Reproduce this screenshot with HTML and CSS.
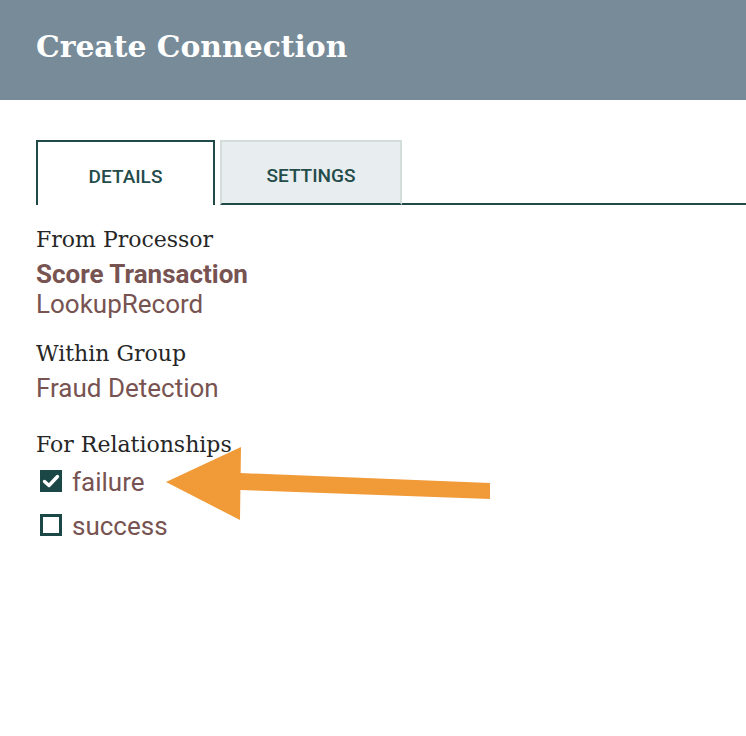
FILE: index.html
```html
<!DOCTYPE html>
<html>
<head>
<meta charset="utf-8">
<link rel="stylesheet" href="styles.css">
</head>
<body>
<div class="header"><h1 class="title">Create Connection</h1></div>
<div class="content">
  <div class="tabs">
    <div class="tab active">DETAILS</div>
    <div class="tab">SETTINGS</div>
    <div class="tab-fill"></div>
  </div>
  <div class="section first">
    <div class="label">From Processor</div>
    <div class="value bold">Score Transaction</div>
    <div class="value next">LookupRecord</div>
  </div>
  <div class="section">
    <div class="label">Within Group</div>
    <div class="value">Fraud Detection</div>
  </div>
  <div class="section rels">
    <div class="label">For Relationships</div>
    <div class="rel"><span class="box checked"><svg viewBox="0 0 22 22" width="22" height="22"><path d="M4.5 11.5 L9 15.5 L17.5 6.5" fill="none" stroke="#fff" stroke-width="3.4" stroke-linecap="round" stroke-linejoin="round"/></svg></span><span class="rel-name">failure</span></div>
    <div class="rel"><span class="box"></span><span class="rel-name">success</span></div>
  </div>
</div>
<svg class="arrow" width="746" height="736" viewBox="0 0 746 736">
  <polygon points="240,473 490,483 490,499 240,490" fill="#f19a38"/>
  <polygon points="166,482 241,447 240,520" fill="#f19a38"/>
</svg>
</body>
</html>
```
FILE: styles.css
```css
html, body { margin: 0; padding: 0; background: #fff; }
body { width: 746px; height: 736px; overflow: hidden; position: relative; }
.header { height: 100px; background: #778b99; padding-left: 36px; box-sizing: border-box; padding-top: 27px; }
.title { margin: 0; font-family: "DejaVu Serif", serif; font-weight: bold; font-size: 29.8px; line-height: 40px; color: #fff; }
.content { padding: 40px 0 0 36px; }
.tabs { display: flex; height: 65px; }
.tab { width: 179px; box-sizing: border-box; display: flex; align-items: center; justify-content: center; font-family: Roboto, sans-serif; font-weight: 500; font-size: 19px; color: #244c4a; padding-top: 5px; }
.tab.active { border: 2px solid #1f4a48; border-bottom: none; background: #fff; }
.tab:not(.active) { margin-left: 5px; width: 182px; background: #e8edef; border: 2px solid #d3dddb; border-bottom: 2px solid #1f4a48; }
.tab-fill { flex: 1; border-bottom: 2px solid #1f4a48; }
.section { margin-top: 20px; }
.section.first { margin-top: 20px; }
.label { font-family: "DejaVu Serif", serif; font-size: 22px; line-height: 30px; color: #262626; height: 30px; }
.value { font-family: Roboto, sans-serif; font-size: 26px; line-height: 30px; color: #775351; margin-top: 4px; }
.value.next { margin-top: 0; }
.value.bold { font-weight: bold; }
.rels { margin-top: 27px; }
.rel { display: flex; align-items: center; height: 44px; margin-left: 4px; }
.box { width: 22px; height: 22px; box-sizing: border-box; border: 3px solid #1b4847; background: #fff; display: inline-block; position: relative; top: -1px; }
.box.checked { background: #1b4847; border: none; }
.box svg { display: block; }
.rel-name { font-family: Roboto, sans-serif; font-size: 26px; color: #775351; margin-left: 10px; }
.arrow { position: absolute; left: 0; top: 0; pointer-events: none; }
```
